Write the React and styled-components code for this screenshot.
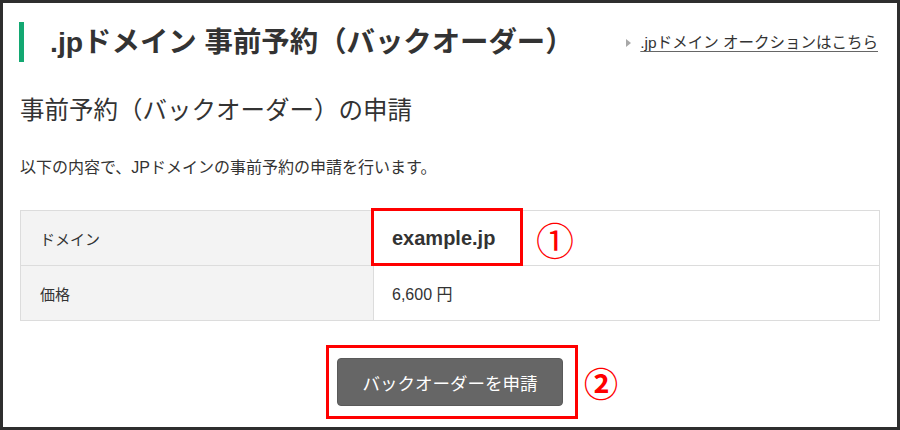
import React from "react";
import styled, { createGlobalStyle } from "styled-components";

const Global = createGlobalStyle`
  html, body { margin: 0; padding: 0; background: #fff; }
  body { font-family: "Liberation Sans", "Noto Sans CJK JP", sans-serif; color: #333; }
  * { box-sizing: border-box; }
`;

const Frame = styled.div`
  width: 900px;
  height: 430px;
  border: 3px solid #2e2e2e;
  padding: 19px 17px 0 17px;
  overflow: hidden;
`;

const Header = styled.header`
  display: flex;
  align-items: center;
  height: 40px;
`;

const Bar = styled.span`
  width: 5px;
  height: 40px;
  margin-left: -1px;
  background: #13a872;
  flex: none;
`;

const Title = styled.h1`
  margin: 0 0 0 26px;
  font-family: "Liberation Sans", "Noto Sans CJK JP", sans-serif;
  font-size: 28.4px;
  font-weight: 700;
  line-height: 40px;
  color: #333;
`;

const HeadLink = styled.a`
  margin-left: auto;
  margin-right: 2px;
  display: flex;
  align-items: center;
  gap: 9px;
  font-size: 15.5px;
  color: #333;
  text-decoration: underline;
  text-decoration-color: #666;
  text-underline-offset: 3px;
  line-height: 20px;
  margin-top: 2px;
`;

const Arrow = styled.span`
  width: 0;
  height: 0;
  border-left: 5px solid #a8a8a8;
  border-top: 4px solid transparent;
  border-bottom: 4px solid transparent;
`;

const SubTitle = styled.h2`
  margin: 32px 0 0 0;
  font-size: 24.5px;
  font-weight: 400;
  line-height: 34px;
  color: #333;
`;

const Lead = styled.p`
  margin: 29px 0 0 0;
  font-size: 16px;
  line-height: 22px;
  color: #333;
`;

const Table = styled.div`
  margin-top: 31px;
  width: 860px;
  display: grid;
  grid-template-columns: 353px 1fr;
  border: 1px solid #dcdcdc;
  border-bottom: none;
`;

const Label = styled.div`
  height: 55px;
  background: #f3f3f3;
  border-bottom: 1px solid #dcdcdc;
  border-right: 1px solid #dcdcdc;
  display: flex;
  align-items: center;
  padding-left: 19px;
  font-size: 15px;
  color: #333;
`;

const Value = styled.div`
  position: relative;
  height: 55px;
  border-bottom: 1px solid #dcdcdc;
  display: flex;
  align-items: center;
  padding-left: 18px;
  font-size: ${(p) => (p.$strong ? "20px" : "16px")};
  font-weight: ${(p) => (p.$strong ? 700 : 400)};
  color: #333;
`;

const Mark = styled.span`
  position: absolute;
  border: 3px solid #ff0000;
  pointer-events: none;
`;

const Circled = styled.span`
  position: absolute;
  color: #ff0000;
  font-family: "Noto Sans CJK JP", sans-serif;
  font-size: ${(p) => p.$size}px;
  font-weight: ${(p) => p.$weight};
  line-height: 1;
`;

const Actions = styled.div`
  position: relative;
  display: flex;
  justify-content: center;
  margin-top: 37px;
`;

const Button = styled.button`
  width: 226px;
  height: 48px;
  background: #666;
  border: 1px solid #5a5a5a;
  border-radius: 4px;
  color: #fff;
  font-family: "Liberation Sans", "Noto Sans CJK JP", sans-serif;
  font-size: 17.5px;
  cursor: pointer;
`;

export default function App() {
  return (
    <>
      <Global />
      <Frame>
        <Header>
          <Bar />
          <Title>.jpドメイン 事前予約（バックオーダー）</Title>
          <HeadLink href="#">
            <Arrow />
            .jpドメイン オークションはこちら
          </HeadLink>
        </Header>
        <SubTitle>事前予約（バックオーダー）の申請</SubTitle>
        <Lead>以下の内容で、JPドメインの事前予約の申請を行います。</Lead>
        <Table>
          <Label>ドメイン</Label>
          <Value $strong>
            example.jp
            <Mark style={{ left: -3, top: -3, width: 152, height: 58 }} />
            <Circled $size={38} $weight={400} style={{ left: 162, top: 9 }}>①</Circled>
          </Value>
          <Label>価格</Label>
          <Value>6,600 円</Value>
        </Table>
        <Actions>
          <Button>バックオーダーを申請</Button>
          <Mark style={{ left: 306, top: -13, width: 252, height: 74 }} />
          <Circled $size={34} $weight={700} style={{ left: 564, top: 8 }}>②</Circled>
        </Actions>
      </Frame>
    </>
  );
}
